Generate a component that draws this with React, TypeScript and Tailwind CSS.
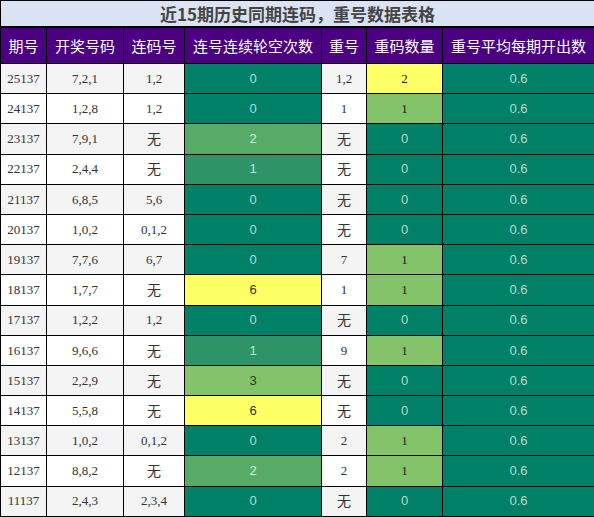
import React from "react";

type Row = [string, string, string, number, string, number];

const rows: Row[] = [
  ["25137", "7,2,1", "1,2", 0, "1,2", 2],
  ["24137", "1,2,8", "1,2", 0, "1", 1],
  ["23137", "7,9,1", "无", 2, "无", 0],
  ["22137", "2,4,4", "无", 1, "无", 0],
  ["21137", "6,8,5", "5,6", 0, "无", 0],
  ["20137", "1,0,2", "0,1,2", 0, "无", 0],
  ["19137", "7,7,6", "6,7", 0, "7", 1],
  ["18137", "1,7,7", "无", 6, "1", 1],
  ["17137", "1,2,2", "1,2", 0, "无", 0],
  ["16137", "9,6,6", "无", 1, "9", 1],
  ["15137", "2,2,9", "无", 3, "无", 0],
  ["14137", "5,5,8", "无", 6, "无", 0],
  ["13137", "1,0,2", "0,1,2", 0, "2", 1],
  ["12137", "8,8,2", "无", 2, "2", 1],
  ["11137", "2,4,3", "2,3,4", 0, "无", 0],
];

const headers = ["期号", "开奖号码", "连码号", "连号连续轮空次数", "重号", "重码数量", "重号平均每期开出数"];

const serif = "font-['Liberation_Serif','Noto_Sans_CJK_SC',serif]";
const sans = "font-['Liberation_Sans','Noto_Sans_CJK_SC',sans-serif]";

function gapCell(n: number) {
  if (n === 6) return "bg-[#ffff66] text-[#333]";
  if (n === 3) return "bg-[#83c36a] text-[#333]";
  if (n === 2) return "bg-[#58ab66] text-[#d6eedd]";
  if (n === 1) return "bg-[#2e9366] text-[#c8e6d6]";
  return "bg-[#008066] text-[#b8dccf]";
}

function repeatCell(n: number) {
  if (n === 2) return `bg-[#ffff66] text-[#222] ${serif}`;
  if (n === 1) return `bg-[#83c36a] text-[#222] ${serif}`;
  return `bg-[#008066] text-[#b8dccf] ${sans}`;
}

function Text({ v }: { v: string }) {
  return v === "无" ? <span className="text-[14px] font-['Noto_Sans_CJK_SC',sans-serif]">无</span> : <>{v}</>;
}

export default function App() {
  return (
    <div className="w-[594px] h-[517px] bg-white">
      <table className="w-[594px] table-fixed border-collapse border border-black text-[13px] text-[#333]">
        <colgroup>
          <col className="w-[46px]" />
          <col className="w-[77px]" />
          <col className="w-[61px]" />
          <col className="w-[137px]" />
          <col className="w-[45px]" />
          <col className="w-[76px]" />
          <col className="w-[152px]" />
        </colgroup>
        <thead>
          <tr className="h-[26px]">
            <th colSpan={7} className="border-b-2 border-black bg-[#dae3f3] text-[17px] font-bold text-[#444] font-['Noto_Sans_CJK_SC',sans-serif] leading-none">
              近15期历史同期连码，重号数据表格
            </th>
          </tr>
          <tr className="h-[37px] bg-[#4b0082] text-white">
            {headers.map((h) => (
              <th key={h} className="border border-black text-[15px] font-normal font-['Noto_Sans_CJK_SC',sans-serif] leading-none">
                {h}
              </th>
            ))}
          </tr>
        </thead>
        <tbody>
          {rows.map((r, i) => {
            const bg = i % 2 === 0 ? "bg-[#f4f4f4]" : "bg-white";
            return (
              <tr key={r[0]} className="h-[30.2px] text-center">
                <td className={`border border-black ${bg} ${serif}`}>{r[0]}</td>
                <td className={`border border-black ${bg} ${serif}`}>{r[1]}</td>
                <td className={`border border-black ${bg} ${serif}`}><Text v={r[2]} /></td>
                <td className={`border border-black ${gapCell(r[3])} ${sans}`}>{r[3]}</td>
                <td className={`border border-black ${bg} ${serif}`}><Text v={r[4]} /></td>
                <td className={`border border-black ${repeatCell(r[5])}`}>{r[5]}</td>
                <td className={`border border-black bg-[#008066] text-[#b8dccf] ${sans}`}>0.6</td>
              </tr>
            );
          })}
        </tbody>
      </table>
    </div>
  );
}
